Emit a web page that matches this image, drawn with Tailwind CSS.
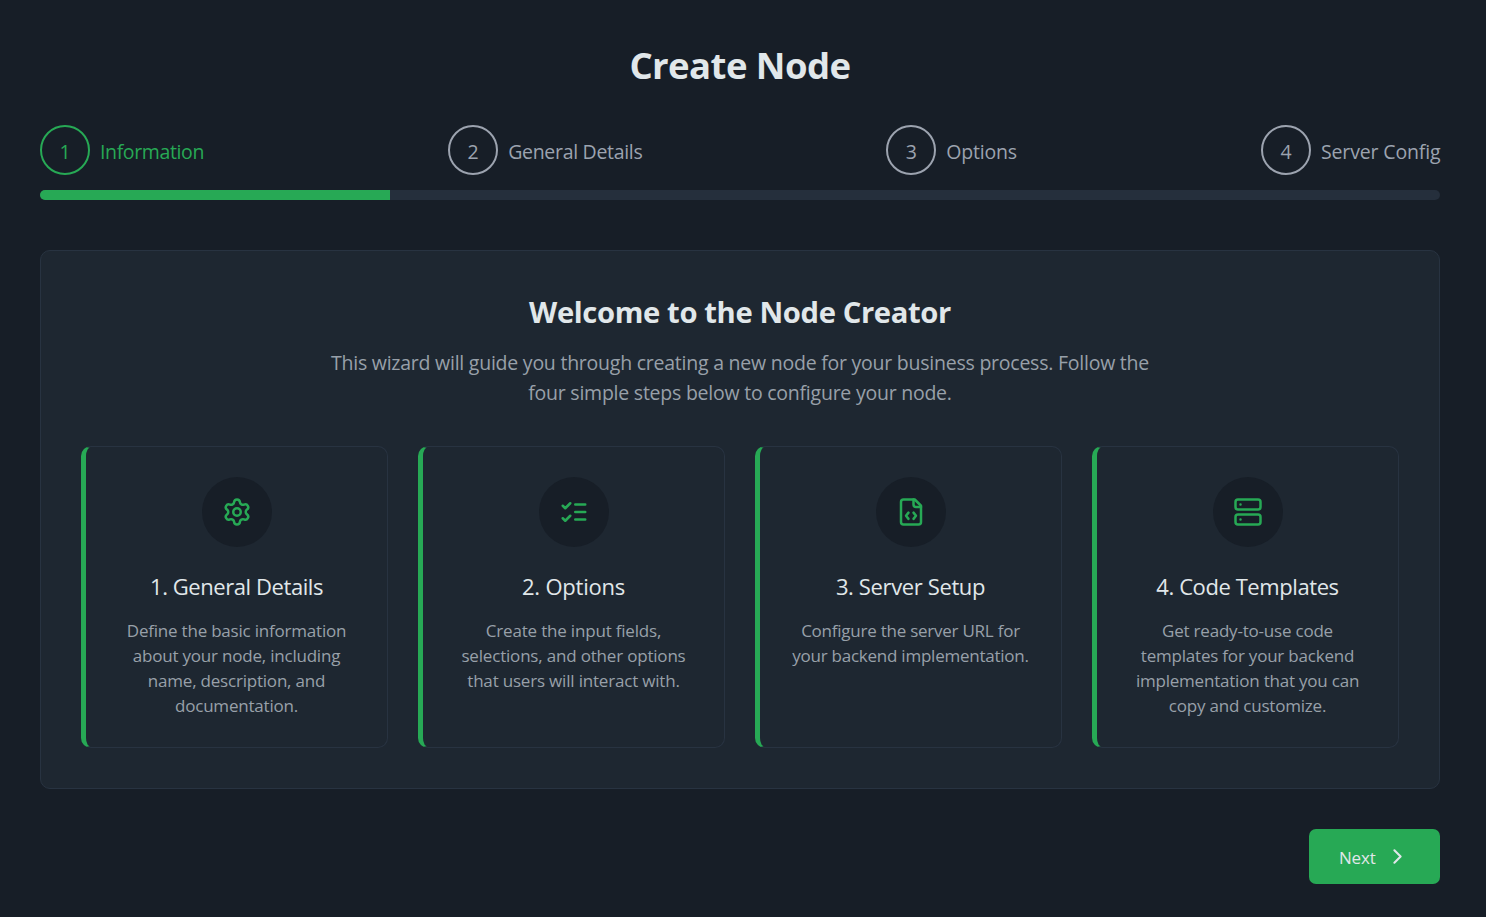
<!DOCTYPE html>
<html lang="en">
<head>
<meta charset="utf-8">
<title>Create Node</title>
<script src="https://cdn.jsdelivr.net/npm/@tailwindcss/browser@4"></script>
</head>
<body class="bg-[#171e27] font-['Open_Sans','Noto_Sans',sans-serif] text-[#e1e7ea] min-h-screen overflow-hidden">
<main class="ml-10 w-[1400px] pt-10">
  <h1 class="h-[50px] leading-[50px] text-center text-[36.5px] font-bold tracking-[-0.55px]">Create Node</h1>

  <ol class="mt-[35px] flex justify-between text-[19.5px] text-[#9ca3af]">
    <li class="flex items-center gap-2.5 text-[#27a955]">
      <span class="size-[50px] rounded-full border-2 border-[#27a955] flex items-center justify-center pt-[3px]">1</span>
      <span class="w-[104px] whitespace-nowrap pt-[3px] tracking-[-0.37px]">Information</span>
    </li>
    <li class="flex items-center gap-2.5">
      <span class="size-[50px] rounded-full border-2 border-[#9ca3af] flex items-center justify-center pt-[3px]">2</span>
      <span class="w-[134px] whitespace-nowrap pt-[3px] tracking-[-0.3px]">General Details</span>
    </li>
    <li class="flex items-center gap-2.5">
      <span class="size-[50px] rounded-full border-2 border-[#9ca3af] flex items-center justify-center pt-[3px]">3</span>
      <span class="w-[70.6px] whitespace-nowrap pt-[3px] tracking-[-0.2px]">Options</span>
    </li>
    <li class="flex items-center gap-2.5">
      <span class="size-[50px] rounded-full border-2 border-[#9ca3af] flex items-center justify-center pt-[3px]">4</span>
      <span class="w-[119px] whitespace-nowrap pt-[3px] tracking-[-0.15px]">Server Config</span>
    </li>
  </ol>

  <div class="mt-[15px] h-2.5 rounded-full bg-[#252f3c] overflow-hidden">
    <div class="h-full bg-[#27a955]" style="width:25%"></div>
  </div>

  <section class="mt-[50px] h-[539px] rounded-[10px] border border-[#283341] bg-[#1e2731] p-10">
    <h2 class="h-[42px] leading-[42px] text-center text-[29.2px] font-bold tracking-[-0.37px]">Welcome to the Node Creator</h2>
    <p class="mt-[15px] text-center text-[19.5px] leading-[30px] tracking-[-0.237px] text-[#98a0a9]">This wizard will guide you through creating a new node for your business process. Follow the<br>four simple steps below to configure your node.</p>

    <div class="mt-[38px] grid grid-cols-4 gap-[30px] text-center">
      <article class="h-[302px] rounded-[10px] border border-l-[5px] border-[#283341] border-l-[#27a955] pt-[30px]">
        <div class="mx-auto size-[70px] rounded-full bg-[#171e27] flex items-center justify-center text-[#27a955]">
          <svg class="size-[30px]" viewBox="0 0 24 24" fill="none" stroke="currentColor" stroke-width="2" stroke-linecap="round" stroke-linejoin="round"><path d="M9.671 4.136a2.34 2.34 0 0 1 4.659 0 2.34 2.34 0 0 0 3.319 1.915 2.34 2.34 0 0 1 2.33 4.033 2.34 2.34 0 0 0 0 3.831 2.34 2.34 0 0 1-2.33 4.033 2.34 2.34 0 0 0-3.319 1.915 2.34 2.34 0 0 1-4.659 0 2.34 2.34 0 0 0-3.32-1.915 2.34 2.34 0 0 1-2.33-4.033 2.34 2.34 0 0 0 0-3.831A2.34 2.34 0 0 1 6.35 6.051a2.34 2.34 0 0 0 3.319-1.915"/><circle cx="12" cy="12" r="3"/></svg>
        </div>
        <h3 class="mt-[22px] h-[34px] leading-[34px] text-[22px] tracking-[-0.43px]">1. General Details</h3>
        <p class="mt-[15px] text-[17px] leading-[25px] tracking-[-0.21px] text-[#98a0a9]">Define the basic information<br>about your node, including<br>name, description, and<br>documentation.</p>
      </article>
      <article class="h-[302px] rounded-[10px] border border-l-[5px] border-[#283341] border-l-[#27a955] pt-[30px]">
        <div class="mx-auto size-[70px] rounded-full bg-[#171e27] flex items-center justify-center text-[#27a955]">
          <svg class="size-[30px]" viewBox="0 0 24 24" fill="none" stroke="currentColor" stroke-width="2" stroke-linecap="round" stroke-linejoin="round"><path d="M13 6h8M13 12h8M13 18h8M3 17l2 2 4-4M3 7l2 2 4-4"/></svg>
        </div>
        <h3 class="mt-[22px] h-[34px] leading-[34px] text-[22px] tracking-[-0.22px]">2. Options</h3>
        <p class="mt-[15px] text-[17px] leading-[25px] tracking-[-0.19px] text-[#98a0a9]">Create the input fields,<br>selections, and other options<br>that users will interact with.</p>
      </article>
      <article class="h-[302px] rounded-[10px] border border-l-[5px] border-[#283341] border-l-[#27a955] pt-[30px]">
        <div class="mx-auto size-[70px] rounded-full bg-[#171e27] flex items-center justify-center text-[#27a955]">
          <svg class="size-[30px]" viewBox="0 0 24 24" fill="none" stroke="currentColor" stroke-width="2" stroke-linecap="round" stroke-linejoin="round"><path d="M10 12.5 8 15l2 2.5"/><path d="m14 12.5 2 2.5-2 2.5"/><path d="M14 2v4a2 2 0 0 0 2 2h4"/><path d="M15 2H6a2 2 0 0 0-2 2v16a2 2 0 0 0 2 2h12a2 2 0 0 0 2-2V7z"/></svg>
        </div>
        <h3 class="mt-[22px] h-[34px] leading-[34px] text-[22px] tracking-[-0.37px]">3. Server Setup</h3>
        <p class="mt-[15px] text-[17px] leading-[25px] tracking-[-0.24px] text-[#98a0a9]">Configure the server URL for<br>your backend implementation.</p>
      </article>
      <article class="h-[302px] rounded-[10px] border border-l-[5px] border-[#283341] border-l-[#27a955] pt-[30px]">
        <div class="mx-auto size-[70px] rounded-full bg-[#171e27] flex items-center justify-center text-[#27a955]">
          <svg class="size-[30px]" viewBox="0 0 24 24" fill="none" stroke="currentColor" stroke-width="2" stroke-linecap="round" stroke-linejoin="round"><rect x="2" y="2" width="20" height="8" rx="2"/><rect x="2" y="14" width="20" height="8" rx="2"/><path d="M6 6h.01M6 18h.01"/></svg>
        </div>
        <h3 class="mt-[22px] h-[34px] leading-[34px] text-[22px] tracking-[-0.42px]">4. Code Templates</h3>
        <p class="mt-[15px] text-[17px] leading-[25px] tracking-[-0.21px] text-[#98a0a9]">Get ready-to-use code<br>templates for your backend<br>implementation that you can<br>copy and customize.</p>
      </article>
    </div>
  </section>

  <div class="mt-10 flex justify-end">
    <button class="h-[55px] w-[131px] rounded-[7px] bg-[#27a955] px-[30px] flex items-center justify-between text-[17px] tracking-[-0.2px]">
      <span class="pt-0.5">Next</span>
      <svg class="size-[25px]" viewBox="0 0 24 24" fill="none" stroke="currentColor" stroke-width="2" stroke-linecap="round" stroke-linejoin="round"><path d="m9 18 6-6-6-6"/></svg>
    </button>
  </div>
</main>
</body>
</html>
